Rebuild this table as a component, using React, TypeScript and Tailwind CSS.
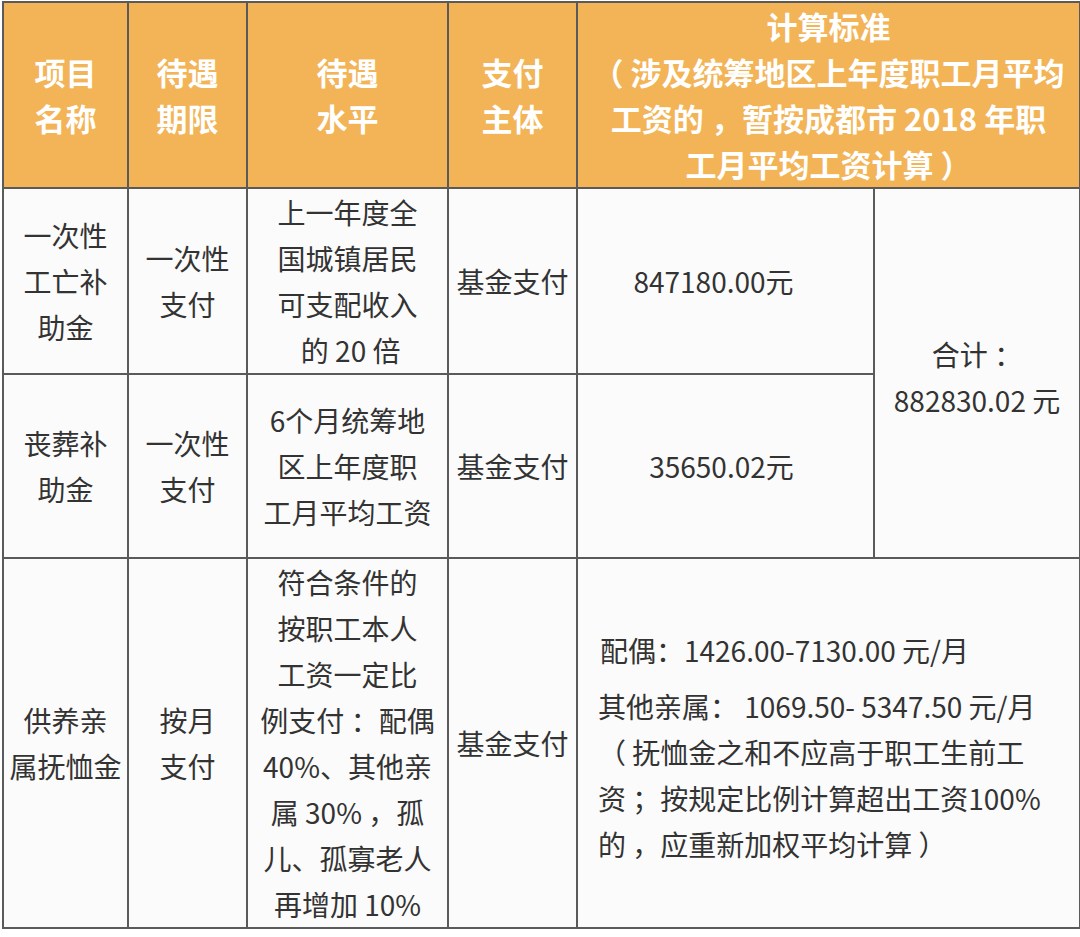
const font = { fontFamily: '"Noto Sans CJK SC", "Noto Sans", sans-serif' }

const th = "border-2 border-[#5a5a5a] bg-[#f2b457] text-white font-bold text-[31px] leading-[46px] text-center align-middle whitespace-nowrap"
const td = "border-2 border-[#5a5a5a] text-[#333] text-[28px] leading-[46px] text-center align-middle whitespace-nowrap"

export default function App() {
  return (
    <div className="w-[1080px] h-[937px] bg-white pt-[1px] pl-[2px]" style={font}>
      <table className="table-fixed border-collapse bg-[#fbfbfb] w-[1077px]">
        <colgroup>
          <col className="w-[125px]" />
          <col className="w-[119px]" />
          <col className="w-[201px]" />
          <col className="w-[129px]" />
          <col className="w-[297px]" />
          <col className="w-[206px]" />
        </colgroup>
        <thead>
          <tr className="h-[186px]">
            <th className={th}>项目<br />名称</th>
            <th className={th}>待遇<br />期限</th>
            <th className={th}>待遇<br />水平</th>
            <th className={th}>支付<br />主体</th>
            <th colSpan={2} className={th + " px-0"}>
              计算标准<br />
              （ 涉及统筹地区上年度职工月平均<br />
              工资的 ，暂按成都市 2018 年职<br />
              工月平均工资计算 ）
            </th>
          </tr>
        </thead>
        <tbody>
          <tr className="h-[186px]">
            <td className={td}>一次性<br />工亡补<br />助金</td>
            <td className={td}>一次性<br />支付</td>
            <td className={td + " leading-[46.5px]"}>上一年度全<br />国城镇居民<br />可支配收入<br />&nbsp;的 20 倍</td>
            <td className={td}>基金支付</td>
            <td className={td + " pr-6"}>847180.00元</td>
            <td rowSpan={2} className={td + " leading-[44px] pt-2"}>合计 ：<br />882830.02 元</td>
          </tr>
          <tr className="h-[184px]">
            <td className={td}>丧葬补<br />助金</td>
            <td className={td}>一次性<br />支付</td>
            <td className={td}>6个月统筹地<br />区上年度职<br />工月平均工资</td>
            <td className={td}>基金支付</td>
            <td className={td + " pr-2"}>35650.02元</td>
          </tr>
          <tr className="h-[370px]">
            <td className={td}>供养亲<br />属抚恤金</td>
            <td className={td}>按月<br />支付</td>
            <td className={td + " leading-[46.5px]"}>
              符合条件的<br />按职工本人<br />工资一定比<br />例支付 ：配偶<br />40%、其他亲<br />属 30% ，孤<br />儿、孤寡老人<br />再增加 10%
            </td>
            <td className={td}>基金支付</td>
            <td colSpan={2} className={td + " text-left pl-5 pt-2"}>
              <div className="pl-[2px] mb-[10px]">配偶：1426.00-7130.00 元/月</div>
              <div>其他亲属： 1069.50- 5347.50 元/月</div>
              <div>（ 抚恤金之和不应高于职工生前工</div>
              <div>资 ；按规定比例计算超出工资100%</div>
              <div>的 ，应重新加权平均计算 ）</div>
            </td>
          </tr>
        </tbody>
      </table>
    </div>
  )
}
